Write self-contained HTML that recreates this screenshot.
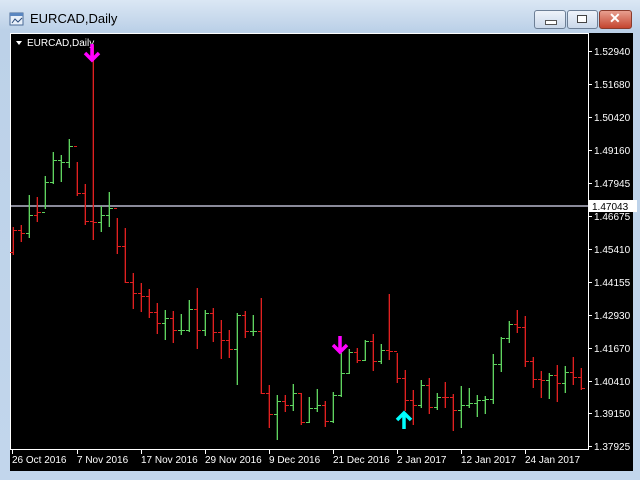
<!DOCTYPE html>
<html><head><style>
body{margin:0;width:640px;height:480px;overflow:hidden;background:#c4d6ea;font-family:"Liberation Sans",sans-serif}
#win{position:absolute;left:0;top:0;width:640px;height:480px;background:linear-gradient(#dbe7f4,#bcd1e8 30px,#c2d6ec);}
.btn{position:absolute;top:10px;height:17px;border:1px solid #6d7f96;border-radius:3px;background:linear-gradient(#eef3fa,#cad8ea)}
</style></head><body>
<div id="win">
<svg width="16" height="16" style="position:absolute;left:9px;top:11px"><rect x="1" y="2" width="13" height="12" fill="#e8f0fa" stroke="#4a6a96"/><rect x="1" y="2" width="13" height="3" fill="#5a86c0"/><path d="M3 12 L6 8 L9 11 L13 7" stroke="#2a4a7a" fill="none"/></svg>
<div style="position:absolute;left:30px;top:11px;font-size:13px;color:#000">EURCAD,Daily</div>
<div class="btn" style="left:534px;width:30px"><div style="position:absolute;left:10px;top:9px;width:10px;height:3px;background:#fff;border:1px solid #555"></div></div>
<div class="btn" style="left:567px;width:29px"><div style="position:absolute;left:9px;top:4px;width:8px;height:6px;border:1px solid #444;background:#fff"></div></div>
<div class="btn" style="left:599px;width:31px;background:linear-gradient(#e8a090,#c4452f);border-color:#8a3b2c"><div style="position:absolute;left:9px;top:-1px;color:#fff;font-weight:bold;font-size:14px">✕</div></div>
<svg width="640" height="480" style="position:absolute;left:0;top:0" shape-rendering="crispEdges">
<rect x="10" y="33" width="623" height="438" fill="#000"/>
<rect x="10.5" y="33.5" width="578" height="416" fill="none" stroke="#fff"/>
<rect x="11" y="205" width="577" height="2" fill="#8a8a99"/>
<path d="M16 41 L22 41 L19 45 Z" fill="#fff" shape-rendering="auto"/>
<text x="27" y="46" fill="#fff" font-size="10" font-family="Liberation Sans">EURCAD,Daily</text>
<g id="bars"></g>
<g id="ax" fill="#fff" font-size="10" font-family="Liberation Sans"></g>
<rect x="589" y="200" width="48" height="12" fill="#fff"/>
<text x="592" y="210" fill="#000" font-size="10" font-family="Liberation Sans">1.47043</text>
<g shape-rendering="auto" fill="none" stroke-width="3.5" stroke-linejoin="miter">
<path d="M92 44 V60 M85 53 L92 60 L99 53" stroke="#ff00ff"/>
<path d="M340 336 V352 M333 345 L340 352 L347 345" stroke="#ff00ff"/>
<path d="M404 429 V413 M397 420 L404 413 L411 420" stroke="#00ffff"/>
</g>
</svg>
</div>
<script>
var d=[[0,227,255,230],[0,225,242,233],[1,195,238,215],[0,197,222,212],[1,176,209,182],[1,152,184,160],[1,155,182,162],[1,139,168,146],[0,162,196,193],[0,184,225,221],[0,45,240,222],[1,206,232,215],[1,192,227,208],[0,218,254,246],[0,228,283,282],[0,273,309,293],[0,283,312,296],[0,289,318,312],[0,303,334,323],[1,310,340,318],[0,311,343,330],[1,314,335,330],[1,300,332,309],[0,288,349,330],[1,310,336,313],[0,308,342,332],[0,320,359,340],[0,330,358,349],[1,313,385,315],[0,311,338,331],[1,315,336,331],[0,298,394,393],[0,385,428,414],[1,395,440,401],[0,395,412,405],[1,384,411,393],[0,393,425,422],[1,397,423,408],[1,389,412,405],[0,401,427,421],[1,392,423,395],[1,353,397,373],[1,349,374,352],[0,348,363,360],[1,340,361,341],[0,334,371,361],[1,344,364,350],[0,294,360,351],[0,353,383,378],[0,370,411,400],[0,390,425,405],[1,380,408,385],[0,378,414,407],[1,393,410,397],[0,382,408,397],[0,394,431,410],[1,386,428,405],[1,388,408,403],[1,395,417,400],[1,396,414,399],[1,354,404,364],[1,337,372,338],[1,321,343,324],[0,310,333,327],[0,316,367,361],[0,357,388,379],[0,371,398,380],[1,373,399,375],[0,365,402,383],[1,366,393,372],[0,357,385,377],[0,368,390,388]];
var s='',prev=d[0][1]+10;
function r(x,y,w,h,c,op){return '<rect x="'+x+'" y="'+y+'" width="'+w+'" height="'+h+'" fill="'+c+'"'+(op?' fill-opacity="'+op+'"':'')+'/>';}
d.forEach(function(b,i){var x=13+8*i,c=b[0]?'#5fd35f':'#e02020',o=i?prev:b[2]-3;
s+=r(x-1,b[1],1,b[2]-b[1],c,.35)+r(x,b[1],1,b[2]-b[1],c)+r(x-3,o,3,1,c)+r(x+1,b[3],3,1,c);prev=b[3];});
document.getElementById('bars').innerHTML=s;
var L=[["1.52940",51],["1.51680",84],["1.50420",117],["1.49160",150],["1.47945",183],["1.46675",216],["1.45410",249],["1.44155",282],["1.42930",315],["1.41670",348],["1.40410",381],["1.39150",413],["1.37925",446]],a='';
L.forEach(function(l){a+='<rect x="589" y="'+l[1]+'" width="3" height="1"/><text x="594" y="'+(l[1]+4)+'">'+l[0]+'</text>';});
var D=[["26 Oct 2016",12],["7 Nov 2016",77],["17 Nov 2016",141],["29 Nov 2016",205],["9 Dec 2016",269],["21 Dec 2016",333],["2 Jan 2017",397],["12 Jan 2017",461],["24 Jan 2017",525]];
D.forEach(function(t){a+='<rect x="'+t[1]+'" y="450" width="1" height="4"/><text x="'+t[1]+'" y="463">'+t[0]+'</text>';});
document.getElementById('ax').innerHTML=a;
</script>
</body></html>
